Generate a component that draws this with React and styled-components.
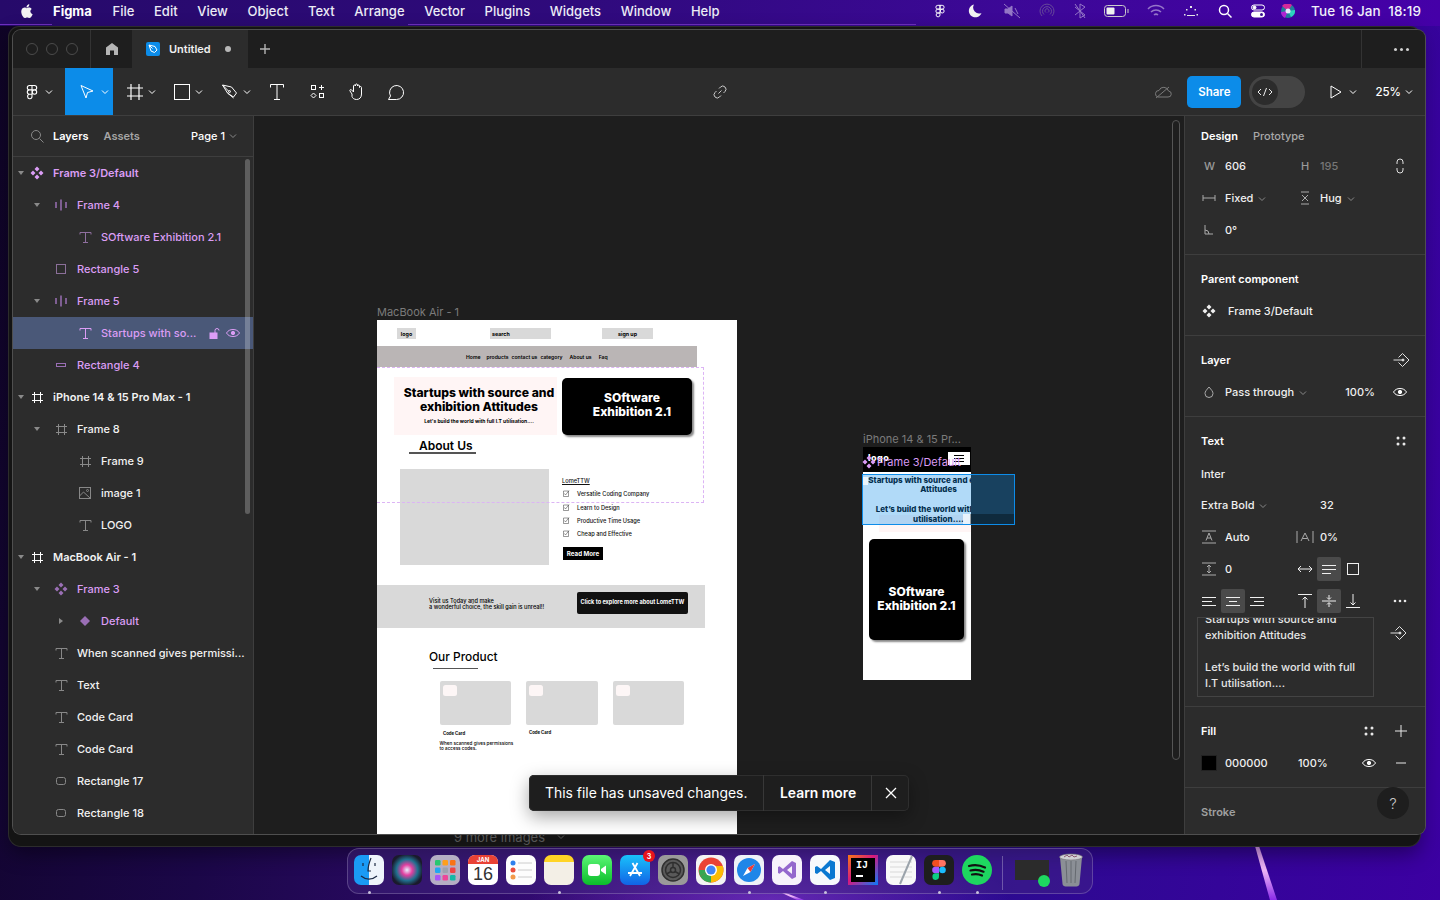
import React from 'react';
import styled, { createGlobalStyle } from 'styled-components';

const Global = createGlobalStyle`
  html, body { margin: 0; padding: 0; background: #14062e; }
  body { width: 1440px; height: 900px; overflow: hidden; font-family: Inter, "Noto Sans", sans-serif; -webkit-font-smoothing: antialiased; }
  * { box-sizing: border-box; }
`;

const Desktop = styled.div`
  width: 1440px; height: 900px; display: flex; flex-direction: column; position: relative; overflow: hidden;
  background:
    radial-gradient(ellipse 240px 60px at 770px 900px, rgba(130,60,210,.6), transparent),
    linear-gradient(100deg, #0f0426 0%, #1b0748 22%, #3a0c80 52%, #2c0a90 72%, #3c00a2 100%);
`;
const Streak = styled.div`
  position: absolute; left: ${p => p.$x}px; top: ${p => p.$y}px; width: ${p => p.$w}px; height: ${p => p.$h}px;
  background: linear-gradient(180deg, #d89af0, #f0b8f8 45%, #8a2be8);
  clip-path: polygon(0 0, 18% 0, 100% 100%, 68% 100%);
`;
const MenuBar = styled.header`
  height: 26px; flex: none; display: flex; align-items: center; padding: 0 19px 4px 20px; color: #fff;
  font-size: 13px; font-weight: 500;
  background:
    linear-gradient(90deg, #6f2fc0, #6f2fc0) 0 24px / 52px 1px no-repeat,
    linear-gradient(90deg, #6f2fc0, #6f2fc0) 408px 24px / 508px 1px no-repeat,
    linear-gradient(90deg, #260a6a, #2f0a7c 40%, #3c0897 70%, #4500a8);
`;
const MenuItems = styled.nav`display: flex; align-items: center; gap: 19.6px; margin-left: 19px; color: #ececf6;`;
const MenuBrand = styled.strong`font-weight: 700; color: #fff; margin-right: 1.2px;`;
const StatusArea = styled.div`margin-left: auto; display: flex; align-items: center; height: 22px;`;
const StatusSlot = styled.span`display: flex; justify-content: center; align-items: center; width: ${p => p.$w}px; opacity: ${p => p.$dim ? .45 : 1};`;
const Clock = styled.span`margin-left: 12px; white-space: pre; font-size: 13.5px; color: #f0f0fa; letter-spacing: .1px;`;

const Window = styled.main`
  flex: none; width: 1411px; height: 819px; margin: 1px 0 0 9px; padding: 3px 0 0 4px; position: relative;
  border-radius: 10px 10px 12px 12px; background: #141414; box-shadow: 0 0 0 1px #2c2c2c, 0 8px 20px rgba(0,0,0,.4);
`;
const AppShell = styled.div`
  position: relative; width: 1412px; height: 804px; display: flex; flex-direction: column; border-radius: 8px; overflow: hidden; background: #2c2c2c;
  box-shadow: 0 0 0 1px #4f4f4f;
`;
const BehindText = styled.div`
  height: 12px; overflow: hidden; color: #555; font-size: 13px; line-height: 6px; padding-left: 441px; white-space: nowrap; display: flex; gap: 12px;
`;
const TabBar = styled.div`height: 38px; flex: none; background: #1e1e1e; display: flex; align-items: stretch; color: #fff;`;
const Traffic = styled.div`width: 78px; display: flex; align-items: center; gap: 8px; padding-left: 13px; border-right: 1px solid #333;`;
const Light = styled.i`width: 12px; height: 12px; border-radius: 50%; border: 1px solid #4b4b4b;`;
const HomeTab = styled.div`width: 41px; display: flex; align-items: center; justify-content: center;`;
const ActiveTab = styled.div`
  width: 116px; background: #2c2c2c; display: flex; align-items: center; padding-left: 14px; font-size: 11px; font-weight: 600; color: #f0f0f0;
`;
const TabIcon = styled.span`width: 14px; height: 14px; margin-right: 9px; border-radius: 2px; background: #0c8ce9; display: flex; align-items: center; justify-content: center;`;
const Dot = styled.i`width: 6px; height: 6px; border-radius: 50%; background: #b8b8b8; margin-left: 14px;`;
const PlusTab = styled.div`width: 34px; display: flex; align-items: center; justify-content: center;`;
const TabEnd = styled.div`margin-left: auto; width: 64px; border-left: 1px solid #333; display: flex; align-items: center; justify-content: center; gap: 3px; padding-left: 16px;`;
const TabDot = styled.i`width: 3px; height: 3px; border-radius: 50%; background: #d0d0d0;`;

const ToolBar = styled.div`height: 48px; flex: none; display: flex; align-items: stretch; border-bottom: 1px solid #3e3e3e; color: #fff; background: #2c2c2c;`;
const ToolBtn = styled.div`
  width: ${p => p.$w}px; flex: none; display: flex; align-items: center; gap: 5px;
  justify-content: ${p => p.$pl === undefined ? 'center' : 'flex-start'}; padding-left: ${p => p.$pl ?? 0}px;
  background: ${p => p.$on ? '#0c8ce9' : 'transparent'};
`;
const ToolCenter = styled.div`flex: 1; display: flex; align-items: center; justify-content: center; padding-right: 131px;`;
const ToolRight = styled.div`display: flex; align-items: center; padding-right: 12px;`;
const CloudSlot = styled.span`display: flex; margin-right: 15px;`;
const ShareBtn = styled.div`width: 54px; height: 32px; border-radius: 5px; background: #0c8ce9; color: #fff; font-size: 11.5px; font-weight: 600; display: flex; align-items: center; justify-content: center;`;
const DevToggle = styled.div`width: 56px; height: 32px; border-radius: 16px; background: #444; margin-left: 8px; padding: 3px; display: flex;`;
const DevKnob = styled.div`width: 26px; height: 26px; border-radius: 50%; background: #2c2c2c; display: flex; align-items: center; justify-content: center;`;
const PlayBox = styled.div`display: flex; align-items: center; gap: 6px; margin-left: 24px;`;
const Zoom = styled.div`display: flex; align-items: center; gap: 4px; margin-left: 18px; font-size: 11.5px; font-weight: 500;`;

const Work = styled.div`flex: 1; display: flex; min-height: 0;`;
const Layers = styled.aside`width: 241px; flex: none; background: #2c2c2c; border-right: 1px solid #3e3e3e; position: relative; overflow: hidden;`;
const LayersHead = styled.div`height: 41px; border-bottom: 1px solid #3e3e3e; display: flex; align-items: center; padding: 0 16px 0 17px; font-size: 11px; font-weight: 600; color: #fff;`;
const HeadTabOff = styled.span`color: #a6a6a6; margin-left: 15px;`;
const HeadTab = styled.span`margin-left: 9px;`;
const PageSel = styled.span`margin-left: auto; display: flex; align-items: center; gap: 4px; font-weight: 500;`;
const LayerList = styled.div`display: flex; flex-direction: column;`;
const indent = [0, 16, 40];
const Row = styled.div`
  height: 32px; display: flex; align-items: center; padding-left: ${p => indent[p.$level]}px; font-size: 11px; white-space: nowrap; flex: none;
  font-weight: ${p => p.$top ? 600 : 450}; color: ${p => p.$violet ? '#db9df5' : '#f2f2f2'};
  background: ${p => p.$sel ? '#4a5878' : 'transparent'};
`;
const Caret = styled.span`width: 16px; height: 16px; display: flex; align-items: center; justify-content: center; margin-right: ${p => p.$level ? 8 : 0}px; flex: none;`;
const RowIcon = styled.span`width: 16px; height: 16px; display: flex; align-items: center; justify-content: center; margin-right: 8px; flex: none;`;
const RowTrail = styled.span`margin-left: auto; padding-right: 12px; display: flex; align-items: center; gap: 4px;`;
const ListThumb = styled.div`position: absolute; left: 232px; top: 43px; width: 5px; height: 355px; border-radius: 3px; background: rgba(255,255,255,.24);`;

const Canvas = styled.section`flex: 1; background: #1e1e1e; position: relative; overflow: hidden;`;
const FrameLabel = styled.div`position: absolute; left: ${p => p.$x}px; top: ${p => p.$y}px; color: #7b7b7b; font-size: 11px; line-height: 14px; white-space: nowrap;`;
const MacFrame = styled.article`position: absolute; left: 123px; top: 204px; width: 360px; height: 514px; background: #fff; overflow: hidden; color: #000;`;
const MacTop = styled.div`height: 26px; display: flex; align-items: flex-start; padding: 8px 0 0 20px; font-size: 5.3px; font-weight: 700;`;
const GreyChip = styled.div`
  width: ${p => p.$w}px; height: 11px; margin-left: ${p => p.$ml || 0}px; background: #d9d9d9; display: flex; align-items: center;
  justify-content: ${p => p.$left ? 'flex-start' : 'center'}; padding-left: ${p => p.$left ? 2 : 0}px;
`;
const MacNav = styled.div`width: 320px; height: 21px; background: #bab5b5; display: flex; align-items: center; padding-left: 89px; font-size: 5.1px; font-weight: 600; white-space: nowrap;`;
const NavItem = styled.span`margin-left: ${p => p.$ml}px;`;
const HeroRow = styled.div`display: flex; padding: 10px 0 0 17px; align-items: flex-start;`;
const HeroPink = styled.div`width: 163px; height: 58px; background: #fff5f5; text-align: center; padding: 8.5px 0 0 7px; font-size: 12.15px; line-height: 14.5px; font-weight: 800; white-space: nowrap;`;
const HeroSub = styled.div`font-size: 5px; line-height: 8px; font-weight: 700; margin-top: 2.5px;`;
const BlackCard = styled.div`
  width: ${p => p.$w}px; height: ${p => p.$h}px; margin: ${p => p.$m}; background: #000; color: #fff; border-radius: 5px; box-shadow: 2px 2px 2px #888;
  display: flex; align-items: center; justify-content: center; text-align: center; font-weight: 800; font-size: 12px; line-height: 14.4px;
  padding: ${p => p.$pad || 0}; flex: none;
`;
const AboutTitle = styled.div`font-size: 12px; line-height: 14px; font-weight: 600; padding: 3.5px 0 0 42px; height: 17px;`;
const Rule = styled.div`width: ${p => p.$w}px; height: ${p => p.$h}px; margin: ${p => p.$mt || 0}px 0 0 ${p => p.$ml}px; background: #555;`;
const AboutRow = styled.div`display: flex; padding: 15px 0 0 23px; height: 131.5px;`;
const GreyPic = styled.div`width: 149px; height: 96px; background: #d9d9d9;`;
const AboutCol = styled.div`margin-left: 13px; padding-top: 8px; display: flex; flex-direction: column; font-size: 5.7px; font-weight: 500; color: #111; white-space: nowrap;`;
const Lome = styled.u`line-height: 7px; margin-bottom: 3.5px;`;
const CheckRow = styled.div`display: flex; align-items: center; gap: 7px; height: 13.4px; padding-left: 1px;`;
const ReadMore = styled.div`width: 40px; height: 13px; background: #000; color: #fff; font-weight: 700; font-size: 6.2px; display: flex; align-items: center; justify-content: center; margin-top: 6px; margin-left: 1px;`;
const Band = styled.div`width: 328px; height: 43px; background: #d9d9d9; display: flex; align-items: flex-start; padding: 14px 17px 0 52px; font-size: 5.6px; line-height: 5.8px; font-weight: 500; white-space: nowrap;`;
const BandBtn = styled.div`margin-left: auto; margin-top: -7px; width: 111px; height: 22px; border-radius: 2px; background: #111; color: #fff; font-weight: 700; font-size: 5.6px; display: flex; align-items: center; justify-content: center;`;
const ProductTitle = styled.div`font-size: 11.9px; line-height: 14px; font-weight: 450; padding: 22px 0 0 52px;`;
const ProductRow = styled.div`display: grid; grid-template-columns: repeat(3, 71.5px); gap: 15px; padding: 12px 0 0 62.5px;`;
const ProductCol = styled.div`font-size: 4.3px; font-weight: 700;`;
const ProductCard = styled.div`height: 43.5px; background: #d9d9d9; border-radius: 2px; padding: 3.5px 3px;`;
const ProductChip = styled.div`width: 14px; height: 11px; background: #fdf6f6; border-radius: 2.5px;`;
const ProductCap = styled.div`line-height: 5px; padding: ${p => p.$pad};`;
const ProductNote = styled.div`font-weight: 500; font-size: 4.6px; line-height: 5.2px; margin-top: 5px; white-space: nowrap;`;
const ComponentDash = styled.div`position: absolute; left: 0; top: 47px; width: 327px; height: 136px; border: 1px dashed #dcb4f5; border-left: 0;`;

const PhoneFrame = styled.article`position: absolute; left: 609px; top: 331px; width: 108px; height: 233px; background: #fff; overflow: hidden;`;
const PhoneHead = styled.div`height: 25px; background: #000; display: flex; align-items: flex-start; padding: 5px 1px 0 5px; justify-content: space-between; color: #fff; font-size: 9px; line-height: 12px; font-weight: 800; letter-spacing: .5px;`;
const Burger = styled.div`width: 22px; height: 13px; background: #fff; display: flex; flex-direction: column; gap: 2px; align-items: center; justify-content: center;`;
const BurgerLine = styled.i`width: 10px; height: 1px; background: #000;`;
const PhoneText = styled.div`position: relative; width: 153px; margin-left: -1px; margin-top: 3.5px; text-align: center; font-size: 8px; line-height: 9.8px; font-weight: 800; color: #000;`;
const PhonePink = styled.div`position: absolute; left: 16px; top: 68px; width: 92px; height: 17px; background: #fff5f5;`;
const Selection = styled.div`position: absolute; left: 608px; top: 358px; width: 153px; height: 51px; border: 1px solid #0d8ce9; background: rgba(13,140,233,.32); pointer-events: none;`;
const SelDark = styled.div`position: absolute; right: 0; bottom: 0; width: 44px; height: 10px; background: rgba(0,0,0,.35);`;
const SelPatchTop = styled.div`position: absolute; left: 0; top: 2px; width: 5px; height: 8px; background: rgba(255,255,255,.75);`;
const SelPatchEnd = styled.div`position: absolute; left: 100px; bottom: 0; width: 8px; height: 10px; background: rgba(255,255,255,.7);`;
const PhoneTag = styled.div`position: absolute; left: 607px; top: 337.5px; display: flex; align-items: center; color: #d99bf5; font-size: 11px; line-height: 14px;`;
const CanvasThumb = styled.div`position: absolute; left: 918px; top: 4px; width: 8px; height: 640px; border-radius: 4px; background: #1e1e1e; border: 1px solid #555;`;

const Toast = styled.div`position: absolute; left: 275px; top: 659px; width: 380px; height: 36px; background: #1e1e1e; border-radius: 5px; box-shadow: 0 0 0 1px #2e2e2e inset, 0 6px 18px rgba(0,0,0,.35); display: flex; align-items: stretch; color: #fff; font-size: 13.9px;`;
const ToastText = styled.div`display: flex; align-items: center; padding-left: 16px; width: 235px; border-right: 1px solid #383838;`;
const ToastLink = styled.div`display: flex; align-items: center; padding-left: 16px; width: 108px; font-weight: 600; border-right: 1px solid #383838;`;
const ToastClose = styled.div`flex: 1; display: flex; align-items: center; justify-content: center;`;

const Props = styled.aside`width: 241px; flex: none; background: #2c2c2c; border-left: 1px solid #3e3e3e; position: relative; overflow: hidden; font-size: 11px; color: #f0f0f0; font-weight: 450;`;
const Section = styled.div`
  border-bottom: ${p => p.$last ? 0 : '1px solid #3e3e3e'}; padding-top: ${p => p.$pt ?? 0}px; height: ${p => p.$h}px; position: relative;
`;
const PropRow = styled.div`height: ${p => p.$h || 32}px; display: grid; grid-template-columns: 24px 76px 19px 1fr 34px; align-items: center; padding: 0 8px 0 16px; white-space: nowrap;`;
const FontRow = styled.div`height: 30px; display: grid; grid-template-columns: 119px 1fr; align-items: center; padding-left: 16px; white-space: nowrap;`;
const TextRow = styled.div`height: ${p => p.$h || 32}px; display: flex; align-items: center; padding: 0 16px; white-space: nowrap;`;
const Title = styled.div`height: 32px; display: flex; align-items: center; justify-content: space-between; padding: 0 16px; font-weight: 600; color: #fff;`;
const TitleIcons = styled.span`display: flex; gap: 16px;`;
const Muted = styled.span`color: ${p => p.$c || '#9a9a9a'};`;
const TabOff = styled.span`color: #a8a8a8; margin-left: 15px;`;
const Strong = styled.span`font-weight: 600; color: #fff;`;
const Ico = styled.span`display: flex; align-items: center; margin-left: ${p => p.$ml || 0}px;`;
const LetterW = styled(Muted)`padding-left: 3px;`;
const ParentName = styled.span`padding-left: 3px;`;
const Chev = styled.span`display: inline-flex; align-items: center; margin-left: 2px; vertical-align: middle;`;
const TrailIcon = styled.span`display: flex; justify-content: center; align-items: center;`;
const BlendName = styled.span`grid-column: 2 / 4;`;
const Pct = styled.span`text-align: right; padding-right: 8px;`;
const AlignRow = styled.div`height: 32px; display: flex; align-items: center; padding-left: 12px;`;
const AlignBtn = styled.span`width: 24px; height: 24px; border-radius: 2px; display: flex; align-items: center; justify-content: center; background: ${p => p.$on ? '#4a4a4a' : 'transparent'}; flex: none;`;
const Spacer = styled.span`width: ${p => p.$w}px; flex: none;`;
const ContentBox = styled.div`position: absolute; left: 12px; top: 200px; width: 177px; height: 80px; border: 1px solid #444; overflow: hidden; padding: 0 7px; line-height: 16px; color: #e6e6e6; font-size: 11px;`;
const ContentInner = styled.div`margin-top: -7px;`;
const ContentIcon = styled.span`position: absolute; left: 205px; top: 208px;`;
const FillRow = styled.div`height: 32px; display: grid; grid-template-columns: 24px 73px 1fr 32px 32px; align-items: center; padding: 0 8px 0 16px;`;
const Swatch = styled.i`width: 16px; height: 16px; background: #000; display: block; border: 1px solid #222;`;
const HelpBtn = styled.div`position: absolute; left: 192px; bottom: 15px; width: 32px; height: 32px; border-radius: 50%; background: #1e1e1e; color: #c8c8c8; font-size: 15px; font-weight: 300; display: flex; align-items: center; justify-content: center;`;

const Dock = styled.footer`
  width: 746px; height: 46px; margin: 2px auto 0; border-radius: 12px; border: 1px solid rgba(255,255,255,.2); flex: none; display: flex; align-items: flex-start; padding: 6px 0 0 6px;
  background: rgba(70,40,130,.42); position: relative;
`;
const Tile = styled.div`
  position: relative; width: ${p => p.$w || 30}px; height: 30px; flex: none; margin-right: 8px; border-radius: ${p => p.$r ?? '7px'}; background: ${p => p.$bg || 'transparent'}; display: flex; align-items: center; justify-content: center;
`;
const RunDot = styled.i`position: absolute; left: 13.5px; top: 36px; width: 3px; height: 3px; border-radius: 50%; background: #c8c0dc;`;
const Badge = styled.b`position: absolute; right: -5px; top: -5px; width: 12px; height: 12px; border-radius: 50%; background: #e8141c; color: #fff; font-size: 7px; font-weight: 700; display: flex; align-items: center; justify-content: center;`;
const CalTile = styled(Tile)`background: #fff; overflow: hidden; flex-direction: column; justify-content: flex-start; color: #333;`;
const CalHead = styled.div`height: 9px; width: 100%; background: #e94235; color: #fff; font-size: 6px; line-height: 9px; text-align: center; font-weight: 700;`;
const CalDay = styled.div`font-size: 18px; line-height: 21px; font-weight: 300; font-family: "Liberation Sans", sans-serif;`;
const DockDivider = styled.i`width: 1px; height: 34px; background: rgba(255,255,255,.28); margin: 1px 12px 0 2px; flex: none;`;
const IJText = styled.span`color: #fff; font-family: "Liberation Mono", monospace; font-weight: 700; font-size: 10px; position: absolute; left: 8px; top: 5px;`;
const IJBar = styled.i`position: absolute; left: 8px; top: 20px; width: 7px; height: 1.5px; background: #fff;`;
const IJInner = styled.div`position: absolute; inset: 3px; background: #000;`;
const Thumb = styled.div`width: 34px; height: 20px; background: #2b2b2b; margin-top: 5px; position: relative; margin-right: 9px; flex: none;`;
const ThumbBadge = styled.i`position: absolute; right: -1px; bottom: -7px; width: 12px; height: 12px; border-radius: 50%; background: #1ed760;`;

const S = ({ w = 16, h = 16, vb, children, c = 'currentColor', sw = 1, ...r }) => (
  <svg width={w} height={h} viewBox={vb || `0 0 ${w} ${h}`} fill="none" stroke={c} strokeWidth={sw} {...r}>{children}</svg>
);
const Chevron = ({ c = '#fff' }) => <S w={8} h={6} c={c}><path d="M1 1.5l3 3 3-3" /></S>;
const FigmaMark = ({ c = '#fff', size = 16 }) => (
  <S w={size} h={size} vb="0 0 16 16" c={c} sw={1.1}>
    <path d="M8 1.5H5.5a2.2 2.2 0 0 0 0 4.4H8zM8 1.5h2.5a2.2 2.2 0 0 1 0 4.4H8zM8 5.9H5.5a2.2 2.2 0 0 0 0 4.4H8zM8 10.3H5.5a2.2 2.2 0 1 0 2.5 2.2zM12.7 8.1a2.2 2.2 0 1 1-4.4 0 2.2 2.2 0 0 1 4.4 0z" />
  </S>
);
const ToolHash = () => <S c="#fff" sw={1.2}><path d="M4 0v16M12 0v16M0 4h16M0 12h16" /></S>;
const HashIcon = ({ c = '#fff' }) => <S c={c}><path d="M5.500 3v11M11.500 3v11M3 5.500h11M3 11.500h11" /></S>;
const TIcon = ({ c = '#888' }) => <S c={c}><path d="M3 5.500v-2h11v2M8.500 3.500v10M6 13.500h5" /></S>;
const CompIcon = ({ c = '#fff' }) => (
  <S c="none" sw={0}><g fill={c}><path d="M8 1.500l2.500 2.500L8 6.500 5.500 4zM8 9.500l2.500 2.500L8 14.500 5.500 12zM4 5.500L6.500 8 4 10.500 1.500 8zM12 5.500L14.500 8 12 10.500 9.500 8z" /></g></S>
);
const AutoIcon = ({ c = '#9a6fb5' }) => <S c={c} sw={2}><path d="M3 5v6" strokeWidth="1.500" /><path d="M8 2.500v11" strokeWidth="1.500" /><path d="M13 5v6" strokeWidth="1.500" /></S>;
const RectIcon = ({ c = '#8b6f99' }) => <S c={c}><rect x="3.500" y="3.500" width="9" height="9" /></S>;
const SmallRect = ({ c = '#9a6fb5' }) => <S c={c}><rect x="3.500" y="6.500" width="9" height="3" /></S>;
const RoundRect = ({ c = '#888' }) => <S c={c}><rect x="3.500" y="4.500" width="9" height="7" rx="2" /></S>;
const ImageIcon = () => <S c="#888"><rect x="2.500" y="2.500" width="11" height="11" /><path d="M2.500 11l4-4 7 6.500" /><circle cx="10.500" cy="5.500" r="1" /></S>;
const VariantIcon = () => <S c="none" sw={0}><path d="M8 3l5 5-5 5-5-5z" fill="#9a6fb5" /></S>;
const Eye = ({ c = '#fff' }) => <S c={c}><path d="M1.500 8C3 5.500 5.300 4.500 8 4.500s5 1 6.500 3.500c-1.500 2.500-3.800 3.500-6.500 3.500S3 10.500 1.500 8z" /><circle cx="8" cy="8" r="1.700" fill={c} /></S>;
const ArrowDiamond = () => <S c="#e0e0e0"><path d="M.5 8h9M5.500 5.500l4-4 6.500 6.500-6.500 6.500-4-4" /><circle cx="10" cy="8" r="1" fill="#e0e0e0" /></S>;
const FourDots = () => <S c="none" sw={0}><g fill="#e8e8e8"><circle cx="5" cy="5" r="1.500" /><circle cx="11" cy="5" r="1.500" /><circle cx="5" cy="11" r="1.500" /><circle cx="11" cy="11" r="1.500" /></g></S>;
const ThreeDots = () => <S c="none" sw={0}><g fill="#e8e8e8"><circle cx="3" cy="8" r="1.300" /><circle cx="8" cy="8" r="1.300" /><circle cx="13" cy="8" r="1.300" /></g></S>;
const Lines = ({ kind }) => {
  const d = { left: 'M1 4.500h14M1 8.500h10M1 12.500h14', center: 'M1 4.500h14M4 8.500h8M1 12.500h14', right: 'M1 4.500h14M5 8.500h10M1 12.500h14', wrap: 'M1 4.500h14M1 8.500h14M1 12.500h9' }[kind];
  return <S c="#efefef"><path d={d} /></S>;
};
const MiniCheck = () => <S w={7} h={7} c="#333" sw={.5}><path d="M.5 1h5v5.500h-5z" /><path d="M1.500 3.500l1 1.500 3.500-4.500" /></S>;
const CaretDown = () => <S w={8} h={6} c="none" sw={0}><path d="M1 1h6L4 5z" fill="#8a8a8a" /></S>;
const CaretRight = () => <S w={8} h={8} c="none" sw={0}><path d="M2 1l4 3-4 3z" fill="#8a8a8a" /></S>;

const layers = [
  { l: 0, t: 'Frame 3/Default', top: 1, v: 1, i: <CompIcon c="#db9df5" />, car: 1 },
  { l: 1, t: 'Frame 4', v: 1, i: <AutoIcon />, car: 1 },
  { l: 2, t: 'SOftware Exhibition 2.1', v: 1, i: <TIcon c="#8f6f9f" /> },
  { l: 1, t: 'Rectangle 5', v: 1, i: <RectIcon /> },
  { l: 1, t: 'Frame 5', v: 1, i: <AutoIcon />, car: 1 },
  { l: 2, t: 'Startups with so...', v: 1, sel: 1, i: <TIcon c="#db9df5" /> },
  { l: 1, t: 'Rectangle 4', v: 1, i: <SmallRect /> },
  { l: 0, t: 'iPhone 14 & 15 Pro Max - 1', top: 1, i: <HashIcon />, car: 1 },
  { l: 1, t: 'Frame 8', i: <HashIcon c="#8a8a8a" />, car: 1 },
  { l: 2, t: 'Frame 9', i: <HashIcon c="#8a8a8a" /> },
  { l: 2, t: 'image 1', i: <ImageIcon /> },
  { l: 2, t: 'LOGO', i: <TIcon /> },
  { l: 0, t: 'MacBook Air - 1', top: 1, i: <HashIcon />, car: 1 },
  { l: 1, t: 'Frame 3', v: 1, i: <CompIcon c="#9a6fb5" />, car: 1 },
  { l: 2, t: 'Default', v: 1, i: <VariantIcon />, car: 2 },
  { l: 1, t: 'When scanned gives permissi...', i: <TIcon /> },
  { l: 1, t: 'Text', i: <TIcon /> },
  { l: 1, t: 'Code Card', i: <TIcon /> },
  { l: 1, t: 'Code Card', i: <TIcon /> },
  { l: 1, t: 'Rectangle 17', i: <RoundRect /> },
  { l: 1, t: 'Rectangle 18', i: <RoundRect /> },
];

const LayerRow = ({ d }) => (
  <Row $level={d.l} $top={d.top} $violet={d.v} $sel={d.sel}>
    <Caret $level={d.l}>{d.car === 1 ? <CaretDown /> : d.car === 2 ? <CaretRight /> : null}</Caret>
    <RowIcon>{d.i}</RowIcon>
    {d.t}
    {d.sel ? (
      <RowTrail>
        <S w={12} h={12} c="#db9df5"><rect x="1" y="6" width="7" height="5.500" fill="#db9df5" /><path d="M6 6V3.500a2 2 0 0 1 4 0" /></S>
        <Eye c="#db9df5" />
      </RowTrail>
    ) : null}
  </Row>
);

const nav = [['Home', 0], ['products', 6], ['contact us', 3], ['category', 3], ['About us', 7], ['Faq', 7]];
const checks = ['Versatile Coding Company', 'Learn to Design', 'Productive Time Usage', 'Cheap and Effective'];

const MacBook = () => (
  <MacFrame>
    <MacTop>
      <GreyChip $w={19}>logo</GreyChip>
      <GreyChip $w={61} $ml={74} $left>search</GreyChip>
      <GreyChip $w={51} $ml={51}>sign up</GreyChip>
    </MacTop>
    <MacNav>{nav.map(([n, m]) => <NavItem key={n} $ml={m}>{n}</NavItem>)}</MacNav>
    <HeroRow>
      <HeroPink>
        Startups with source and<br />exhibition Attitudes
        <HeroSub>Let's build the world with full I.T utilisation....</HeroSub>
      </HeroPink>
      <BlackCard $w={130} $h={57} $m="1px 0 0 5px" $pad="0 0 3px 10px">SOftware<br />Exhibition 2.1</BlackCard>
    </HeroRow>
    <AboutTitle>About Us</AboutTitle>
    <Rule $w={67} $h={1.5} $ml={32} />
    <AboutRow>
      <GreyPic />
      <AboutCol>
        <Lome>LomeTTW</Lome>
        {checks.map(c => <CheckRow key={c}><MiniCheck />{c}</CheckRow>)}
        <ReadMore>Read More</ReadMore>
      </AboutCol>
    </AboutRow>
    <Band>
      <div>Visit us Today and make<br />a wonderful choice, the skill gain is unreal!!</div>
      <BandBtn>Click to explore more about LomeTTW</BandBtn>
    </Band>
    <ProductTitle>Our Product</ProductTitle>
    <Rule $w={45} $h={1} $ml={56} $mt={4} />
    <ProductRow>
      <ProductCol>
        <ProductCard><ProductChip /></ProductCard>
        <ProductCap $pad="6.500px 0 0 3.500px">Code Card</ProductCap>
        <ProductNote>When scanned gives permissions<br />to access codes.</ProductNote>
      </ProductCol>
      <ProductCol>
        <ProductCard><ProductChip /></ProductCard>
        <ProductCap $pad="5px 0 0 3px">Code Card</ProductCap>
      </ProductCol>
      <ProductCol><ProductCard><ProductChip /></ProductCard></ProductCol>
    </ProductRow>
    <ComponentDash />
  </MacFrame>
);

const Phone = () => (
  <PhoneFrame>
    <PhoneHead>
      <span>logo</span>
      <Burger><BurgerLine /><BurgerLine /><BurgerLine /></Burger>
    </PhoneHead>
    <PhonePink />
    <PhoneText>
      Startups with source and exhibition Attitudes<br /><br />Let’s build the world with full I.T utilisation....
    </PhoneText>
    <BlackCard $w={95} $h={101} $m="15px 0 0 6px" $pad="18px 0 0">SOftware<br />Exhibition 2.1</BlackCard>
  </PhoneFrame>
);

const LeftToolbar = () => (
  <>
    <ToolBtn $w={52} $pl={11}><FigmaMark /><Chevron /></ToolBtn>
    <ToolBtn $w={48} $on $pl={15}>
      <S c="#fff"><path d="M1 1.500l12 5.500-5.500 1.500L6 14z" /></S><Chevron />
    </ToolBtn>
    <ToolBtn $w={47} $pl={14}><ToolHash /><Chevron /></ToolBtn>
    <ToolBtn $w={48} $pl={14}><S c="#fff"><rect x=".5" y=".5" width="15" height="15" /></S><Chevron /></ToolBtn>
    <ToolBtn $w={48} $pl={14}>
      <S c="#fff"><path d="M.5 1l9 2 5 6-3 4-6-4z" /><path d="M.5 1l6.500 6.500M5.500 9l6 5" /><circle cx="7.500" cy="7.500" r="1" /></S><Chevron />
    </ToolBtn>
    <ToolBtn $w={42}><S c="#fff"><path d="M1.500 3.500V.5h13v3M8 .5v15M5 15.500h6" /></S></ToolBtn>
    <ToolBtn $w={40}><S c="#fff"><rect x="1.500" y="1.500" width="4" height="4" /><path d="M11.500 1v5M9 3.500h5" /><path d="M3.500 9L6 11.500 3.500 14 1 11.500z" /><rect x="9.500" y="9.500" width="4" height="4" /></S></ToolBtn>
    <ToolBtn $w={38}>
      <S w={20} h={20} c="#fff"><path d="M5 12l-2-3c-.6-1 .6-2 1.500-1.200L6.500 10V4c0-1.300 2-1.300 2 0V3c0-1.400 2-1.400 2 0v1c0-1.300 2-1.300 2 0v1.500c0-1.300 2-1.300 2 0V12c0 3.500-2 5.500-5 5.500-2.500 0-4-1.500-4.500-3z" /></S>
    </ToolBtn>
    <ToolBtn $w={40}><S w={18} h={18} c="#fff"><path d="M1.500 16.500L3.500 13A7 7 0 1 1 9.500 16.500z" /></S></ToolBtn>
  </>
);

const Right = () => (
  <Props>
    <Section $h={139} $pt={4}>
      <TextRow><Strong>Design</Strong><TabOff>Prototype</TabOff></TextRow>
      <PropRow $h={28}>
        <LetterW>W</LetterW><span>606</span><Muted>H</Muted><Muted $c="#777">195</Muted>
        <TrailIcon><S w={12} h={16} c="#e0e0e0"><path d="M3 6V4a3 3 0 0 1 6 0v2M3 10v2a3 3 0 0 0 6 0v-2" /></S></TrailIcon>
      </PropRow>
      <PropRow $h={36}>
        <Ico><S c="#aaa"><path d="M2 5v6M14 5v6M2 8h12" /></S></Ico>
        <span>Fixed <Chev><Chevron c="#888" /></Chev></span>
        <Ico $ml={-4}><S c="#aaa"><path d="M4 2h8M4 14h8M5 5l3 3 3-3M5 11l3-3 3 3" /></S></Ico>
        <span>Hug <Chev><Chevron c="#888" /></Chev></span>
      </PropRow>
      <PropRow $h={28}>
        <Ico><S c="#aaa"><path d="M4 3v9h8M4 8a4 4 0 0 1 4 4" /></S></Ico><span>0°</span>
      </PropRow>
    </Section>
    <Section $h={81} $pt={8}>
      <Title>Parent component</Title>
      <PropRow>
        <Ico><CompIcon c="#f0f0f0" /></Ico>
        <ParentName>Frame 3/Default</ParentName>
      </PropRow>
    </Section>
    <Section $h={81} $pt={8}>
      <Title>Layer<ArrowDiamond /></Title>
      <PropRow>
        <Ico><S c="#aaa"><path d="M8 3c2.500 3 4 4.500 4 6.500a4 4 0 0 1-8 0C4 7.500 5.500 6 8 3z" /></S></Ico>
        <BlendName>Pass through <Chev><Chevron c="#888" /></Chev></BlendName>
        <Pct>100%</Pct>
        <TrailIcon><Eye /></TrailIcon>
      </PropRow>
    </Section>
    <Section $h={290} $pt={8}>
      <Title>Text<FourDots /></Title>
      <TextRow $h={33}>Inter</TextRow>
      <FontRow>
        <span>Extra Bold <Chev><Chevron c="#888" /></Chev></span><span>32</span>
      </FontRow>
      <PropRow $h={33}>
        <Ico><S c="#aaa"><path d="M1 2h14M1 14h14M5 11.500L8 4l3 7.500M6 9h4" /></S></Ico><span>Auto</span>
        <Ico $ml={-5}><S w={18} h={16} c="#aaa"><path d="M1 2v12M17 2v12M5 12L9 4l4 8M6.500 9.500h5" /></S></Ico>
        <span>0%</span>
      </PropRow>
      <PropRow>
        <Ico><S c="#aaa"><path d="M1 2h14M1 14h14M8 4v8M6 6l2-2 2 2M6 10l2 2 2-2" /></S></Ico><span>0</span>
        <Ico $ml={-4}><S c="#efefef"><path d="M1 8h14M4 5L1 8l3 3M12 5l3 3-3 3" /></S></Ico>
        <Ico $ml={-3}>
          <AlignBtn $on><Lines kind="wrap" /></AlignBtn>
          <AlignBtn><S c="#efefef" w={12} h={12}><rect x=".5" y=".5" width="11" height="11" /></S></AlignBtn>
        </Ico>
      </PropRow>
      <AlignRow>
        <AlignBtn><Lines kind="left" /></AlignBtn>
        <AlignBtn $on><Lines kind="center" /></AlignBtn>
        <AlignBtn><Lines kind="right" /></AlignBtn>
        <Spacer $w={24} />
        <AlignBtn><S c="#efefef"><path d="M1 1.500h14M8 4v11M5.500 6.500L8 4l2.500 2.500" /></S></AlignBtn>
        <AlignBtn $on><S c="#efefef"><path d="M1 8h14M8 2v4M8 10v4M6 4.500l2 2 2-2M6 11.500l2-2 2 2" /></S></AlignBtn>
        <AlignBtn><S c="#efefef"><path d="M1 14.500h14M8 1v11M5.500 9.500L8 12l2.500-2.500" /></S></AlignBtn>
        <Spacer $w={27} />
        <ThreeDots />
      </AlignRow>
      <ContentBox>
        <ContentInner>Startups with source and<br />exhibition Attitudes<br /><br />Let’s build the world with full<br />I.T utilisation....</ContentInner>
      </ContentBox>
      <ContentIcon><ArrowDiamond /></ContentIcon>
    </Section>
    <Section $h={81} $pt={8}>
      <Title>Fill
        <TitleIcons><FourDots /><S c="#e8e8e8"><path d="M8 2v12M2 8h12" /></S></TitleIcons>
      </Title>
      <FillRow>
        <Swatch />
        <span>000000</span>
        <span>100%</span>
        <TrailIcon><Eye /></TrailIcon>
        <TrailIcon><S c="#e8e8e8"><path d="M3 8h10" /></S></TrailIcon>
      </FillRow>
    </Section>
    <Section $h={48} $pt={8} $last>
      <Title><Muted $c="#a0a0a0">Stroke</Muted></Title>
    </Section>
    <HelpBtn>?</HelpBtn>
  </Props>
);

const Status = () => (
  <StatusArea>
    <StatusSlot $w={26}><FigmaMark size={14} /></StatusSlot>
    <StatusSlot $w={44}><S w={16} h={16} c="none"><path d="M7 1.500a6.500 6.500 0 1 0 7.500 8.500A6 6 0 0 1 7 1.500z" fill="#f2f2f2" /></S></StatusSlot>
    <StatusSlot $w={30} $dim><S w={18} h={16} c="#fff"><path d="M2 6h3l4-3v10l-4-3H2z" fill="#fff" /><path d="M1 1l16 14M12 5l3 6" /></S></StatusSlot>
    <StatusSlot $w={40} $dim><S w={16} h={16} c="#999"><path d="M3 13a7 7 0 1 1 10 0M5 11.500a4.500 4.500 0 1 1 6 0M7 9.500a2 2 0 1 1 2 0" /></S></StatusSlot>
    <StatusSlot $w={26} $dim><S w={12} h={16} c="#fff"><path d="M1 4l10 8-5 3V1l5 3L1 12M1 1l10 14" /></S></StatusSlot>
    <StatusSlot $w={48}><S w={26} h={14} vb="0 0 26 14" c="#ccc"><rect x=".5" y="1.500" width="21" height="11" rx="3" /><rect x="2.500" y="3.500" width="8" height="7" rx="1" fill="#f0f0f0" stroke="none" /><path d="M24 5v4" /></S></StatusSlot>
    <StatusSlot $w={30} $dim><S w={18} h={14} c="#fff" sw={1.500}><path d="M1 5a11 11 0 0 1 16 0M4 8a7 7 0 0 1 10 0M7 11a3 3 0 0 1 4 0" /></S></StatusSlot>
    <StatusSlot $w={40}><S w={16} h={12} c="none" sw={0}><g fill="#e8e8e8"><rect x="7" y="1" width="2" height="2" /><rect x="3" y="4" width="1.500" height="1.500" /><rect x="11.500" y="4" width="1.500" height="1.500" /><rect x="1" y="9" width="1.500" height="1.500" /><rect x="4" y="10" width="8" height="1" /><rect x="13.500" y="9" width="1.500" height="1.500" /></g></S></StatusSlot>
    <StatusSlot $w={28}><S w={14} h={14} c="#fff" sw={1.500}><circle cx="6" cy="6" r="4.500" /><path d="M9.500 9.500l4 4" /></S></StatusSlot>
    <StatusSlot $w={38}><S w={16} h={16} c="#fff"><rect x="1.500" y="2" width="13" height="5" rx="2.500" /><circle cx="4.500" cy="4.500" r="1.500" fill="#fff" /><rect x="1.500" y="9" width="13" height="5" rx="2.500" fill="#fff" /><circle cx="11.500" cy="11.500" r="1.500" fill="#3a1090" stroke="none" /></S></StatusSlot>
    <StatusSlot $w={22}>
      <svg width="14" height="14" viewBox="0 0 14 14"><circle cx="7" cy="7" r="7" fill="#1f7f9a" /><path d="M7 7L1 2a7 7 0 0 1 10-1z" fill="#d62a9a" /><path d="M7 7l7-1a7 7 0 0 1-4 7z" fill="#2dd4bf" /><path d="M7 7l-3 7a7 7 0 0 1-4-6z" fill="#b026d3" /><circle cx="7" cy="7" r="2.500" fill="#e8e8ff" /></svg>
    </StatusSlot>
    <Clock>Tue 16 Jan  18:19</Clock>
  </StatusArea>
);

const DockApps = () => (
  <>
    <Tile $bg="linear-gradient(90deg,#1a9bf5 50%,#eef4fb 50%)">
      <S w={30} h={30} c="#1d2a44" sw={1.200}><path d="M17 3c-2 5-3 9-3 13h3M9 8v3M21 8v3M7 21c5 4 11 4 16 0" /></S><RunDot />
    </Tile>
    <Tile $bg="radial-gradient(circle,#e8f0ff 0,#e23fa0 25%,#21708f 50%,#1a1a2c 75%)" />
    <Tile $bg="#b5aec4">
      <svg width="22" height="24" viewBox="0 0 22 24">
        {['#28c76f', '#ff9f1c', '#f97316', '#22a7f0', '#9ca3af', '#ef4444', '#a855f7', '#ec4899', '#14b8a6'].map((f, i) => <rect key={f} x={1 + (i % 3) * 7.5} y={2 + Math.floor(i / 3) * 7.5} width="5.5" height="5.5" rx="1.2" fill={f} />)}
      </svg>
    </Tile>
    <CalTile><CalHead>JAN</CalHead><CalDay>16</CalDay></CalTile>
    <Tile $bg="#fdfdfd">
      <svg width="26" height="26" viewBox="0 0 26 26" fill="none"><circle cx="5" cy="6" r="2.500" fill="#2f80ed" /><circle cx="5" cy="13" r="2.500" fill="#eb4d3d" /><circle cx="5" cy="20" r="2.500" fill="#f2994a" /><path d="M10 6h14M10 13h14M10 20h14" stroke="#ccc" /></svg>
    </Tile>
    <Tile $bg="linear-gradient(#ffd426 0 24%,#f3efe6 24%)"><RunDot /></Tile>
    <Tile $bg="linear-gradient(#5bf675,#0bbd2a)">
      <svg width="20" height="14" viewBox="0 0 20 14"><rect x="1" y="1" width="12" height="12" rx="3" fill="#fff" /><path d="M14 6l5-3.500v9L14 8z" fill="#fff" /></svg>
    </Tile>
    <Tile $bg="linear-gradient(#19c2fb,#1263e6)">
      <S w={20} h={20} c="#fff" sw={1.800}><path d="M12.500 3L5 16M7.500 3L15 16M3 13h14" /></S><Badge>3</Badge>
    </Tile>
    <Tile $bg="#9a9a9a">
      <S w={26} h={26} c="#2f2f2f" sw={1.500}><circle cx="13" cy="13" r="11" fill="#5a5a5a" /><circle cx="13" cy="13" r="7.500" /><circle cx="13" cy="13" r="2.500" /><path d="M13 5.500v5M6.500 17l4.500-2.500M19.500 17L15 14.500" /></S>
    </Tile>
    <Tile $bg="#f3f3f3">
      <svg width="26" height="26" viewBox="0 0 26 26"><circle cx="13" cy="13" r="12.500" fill="#ea4335" /><path d="M13 13L2.200 19.300A12.500 12.500 0 0 0 13 25.500z" fill="#34a853" /><path d="M13 13v12.500A12.500 12.500 0 0 0 24.800 9H13z" fill="#fbbc05" /><path d="M13 13L2.200 19.300A12.500 12.500 0 0 1 1 13z" fill="#34a853" /><circle cx="13" cy="13" r="6" fill="#fff" /><circle cx="13" cy="13" r="4.600" fill="#4285f4" /></svg>
    </Tile>
    <Tile $bg="#eef2f7">
      <svg width="26" height="26" viewBox="0 0 26 26"><circle cx="13" cy="13" r="12" fill="#1f86e8" /><path d="M19 7l-4.500 8L7 19l4.500-8z" fill="#fff" /><path d="M19 7l-7.500 4 3 4z" fill="#ee3a35" /></svg><RunDot />
    </Tile>
    <Tile $bg="#f7f2fb">
      <svg width="22" height="22" viewBox="0 0 22 22"><path d="M16 2L7 10 3.500 7.200 2 8v6l1.500.8L7 12l9 8 4-2V4zM16 7v8l-5-4z" fill="#9467cd" fillRule="evenodd" /></svg>
    </Tile>
    <Tile $bg="#f7f9fc">
      <svg width="22" height="22" viewBox="0 0 22 22"><path d="M16 1L7 10 3 7 1 8v6l2 1 4-3 9 9 5-2V3zM16 7v8l-5-4z" fill="#0b78d1" fillRule="evenodd" /></svg><RunDot />
    </Tile>
    <Tile $bg="linear-gradient(135deg,#f97a12,#d6197f 45%,#087cfa)" $r="0">
      <IJInner /><IJText>IJ</IJText><IJBar />
    </Tile>
    <Tile $bg="#f8f8f8">
      <svg width="30" height="30" viewBox="0 0 30 30"><path d="M4 7h22M4 12h22M4 17h22M4 22h22" stroke="#ccc" strokeWidth=".7" /><path d="M26 1L14 29" stroke="#9ba3ab" strokeWidth="2" /></svg>
    </Tile>
    <Tile $bg="#1e1e1e">
      <svg width="14" height="20" viewBox="0 0 14 20"><path d="M7 0H3.500a3.300 3.300 0 0 0 0 6.700H7z" fill="#f24e1e" /><path d="M7 0h3.500a3.300 3.300 0 0 1 0 6.700H7z" fill="#ff7262" /><path d="M7 6.700H3.500a3.300 3.300 0 0 0 0 6.600H7z" fill="#a259ff" /><circle cx="10.500" cy="10" r="3.300" fill="#1abcfe" /><path d="M7 13.300H3.500A3.300 3.300 0 1 0 7 16.600z" fill="#0acf83" /></svg><RunDot />
    </Tile>
    <Tile $bg="#1ed760" $r="50%">
      <S w={20} h={16} c="#111" sw={2.200}><path d="M2 4c5-1.500 11-1 16 1.500M3.500 8.500c4-1 9-.7 13 1.200M5 12.500c3-.7 7-.5 10 1" strokeLinecap="round" /></S><RunDot />
    </Tile>
    <DockDivider />
    <Thumb><ThumbBadge /></Thumb>
    <Tile $w={26}>
      <svg width="26" height="34" viewBox="0 0 26 34" overflow="visible"><path d="M2 4l2.500 27c.2 1.500 1.500 2.500 3 2.500h11c1.500 0 2.800-1 3-2.500L24 4z" fill="#8b8f96" /><path d="M8 8l1 22M13 8v22M18 8l-1 22" stroke="#666a70" /><ellipse cx="13" cy="4" rx="11.500" ry="3" fill="#cfd0d4" stroke="#777" strokeWidth=".6" /><path d="M6 4l3-2 2 2 3-2 2 2 3-1" stroke="#8a5a70" fill="none" /></svg>
    </Tile>
  </>
);

export default function App() {
  return (
    <Desktop>
      <Global />
      <Streak $x={1255} $y={846} $w={22} $h={54} />
      <Streak $x={782} $y={893} $w={22} $h={7} />
      <MenuBar>
        <svg width="14" height="16" viewBox="0 0 14 16"><path fill="#f4f4f4" d="M10.300 8.400c0-1.600 1.300-2.400 1.400-2.500-.8-1.100-2-1.300-2.400-1.300-1-.1-2 .6-2.500.6s-1.300-.6-2.200-.6C3.500 4.700 2.400 5.300 1.800 6.300c-1.200 2.100-.3 5.200.9 6.900.6.800 1.300 1.800 2.200 1.700.9 0 1.200-.5 2.300-.5s1.400.5 2.300.5c.9 0 1.500-.8 2.100-1.700.7-1 1-1.900 1-2-.1 0-2.300-.9-2.300-2.900zM8.600 3.500c.5-.6.800-1.400.7-2.300-.7 0-1.600.5-2.100 1.100-.4.500-.8 1.400-.7 2.200.8.100 1.600-.4 2.100-1z" /></svg>
        <MenuItems>
          <MenuBrand>Figma</MenuBrand>
          {['File', 'Edit', 'View', 'Object', 'Text', 'Arrange', 'Vector', 'Plugins', 'Widgets', 'Window', 'Help'].map(m => <span key={m}>{m}</span>)}
        </MenuItems>
        <Status />
      </MenuBar>
      <Window>
        <AppShell>
          <TabBar>
            <Traffic><Light /><Light /><Light /></Traffic>
            <HomeTab><svg width="14" height="14" viewBox="0 0 14 14"><path fill="#b5b5b5" d="M7 1L1 5.500V13h4V8.500h4V13h4V5.500z" /></svg></HomeTab>
            <ActiveTab>
              <TabIcon><S w={10} h={10} c="#fff"><path d="M1 1l6 1.500 2 3.500-2.500 2.500L3 7zM4.500 4.500L1 1" /></S></TabIcon>
              Untitled<Dot />
            </ActiveTab>
            <PlusTab><S w={12} h={12} c="#b5b5b5" sw={1.400}><path d="M6 1v10M1 6h10" /></S></PlusTab>
            <TabEnd><TabDot /><TabDot /><TabDot /></TabEnd>
          </TabBar>
          <ToolBar>
            <LeftToolbar />
            <ToolCenter><S c="#c8c8c8"><path d="M6.500 9.500l3-3M7 4.500L8.500 3A3 3 0 0 1 13 7.500L11.500 9M9 11.500L7.500 13A3 3 0 0 1 3 8.500L4.500 7" /></S></ToolCenter>
            <ToolRight>
              <CloudSlot><S w={18} h={16} c="#7a7a7a"><path d="M4 13h10a3 3 0 0 0 .5-6A5 5 0 0 0 5 6.500 3.300 3.300 0 0 0 4 13zM2 14L15 3" /></S></CloudSlot>
              <ShareBtn>Share</ShareBtn>
              <DevToggle><DevKnob><S w={16} h={12} c="#eee"><path d="M4 3L1 6l3 3M12 3l3 3-3 3M9.500 2l-3 8" /></S></DevKnob></DevToggle>
              <PlayBox><S w={14} h={16} c="#fff"><path d="M2 2l10 6-10 6z" /></S><Chevron /></PlayBox>
              <Zoom>25%<Chevron /></Zoom>
            </ToolRight>
          </ToolBar>
          <Work>
            <Layers>
              <LayersHead>
                <S w={14} h={14} c="#888"><circle cx="6" cy="6" r="4.500" /><path d="M9.500 9.500l4 4" /></S>
                <HeadTab>Layers</HeadTab>
                <HeadTabOff>Assets</HeadTabOff>
                <PageSel>Page 1 <Chevron c="#888" /></PageSel>
              </LayersHead>
              <LayerList>{layers.map((d, i) => <LayerRow key={i} d={d} />)}</LayerList>
              <ListThumb />
            </Layers>
            <Canvas>
              <FrameLabel $x={123} $y={189}>MacBook Air - 1</FrameLabel>
              <FrameLabel $x={609} $y={316}>iPhone 14 &amp; 15 Pr...</FrameLabel>
              <MacBook />
              <Phone />
              <PhoneTag><CompIcon c="#d99bf5" /><span>Frame 3/Default</span></PhoneTag>
              <Selection><SelPatchTop /><SelPatchEnd /><SelDark /></Selection>
              <CanvasThumb />
              <Toast>
                <ToastText>This file has unsaved changes.</ToastText>
                <ToastLink>Learn more</ToastLink>
                <ToastClose><S w={12} h={12} c="#fff" sw={1.300}><path d="M1 1l10 10M11 1L1 11" /></S></ToastClose>
              </Toast>
            </Canvas>
            <Right />
          </Work>
        </AppShell>
        <BehindText>9 more images<Chevron c="#555" /></BehindText>
      </Window>
      <Dock><DockApps /></Dock>
    </Desktop>
  );
}
